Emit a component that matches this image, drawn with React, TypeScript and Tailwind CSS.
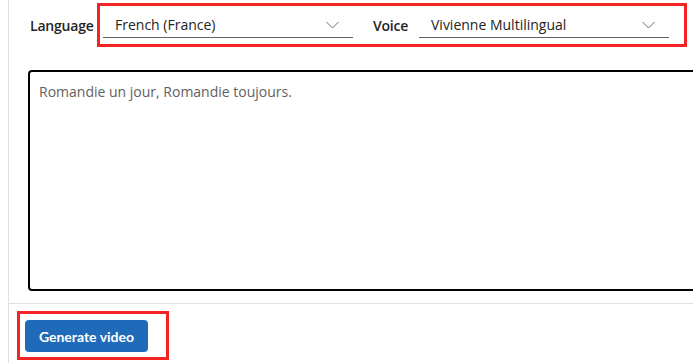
function Chevron() {
  return (
    <svg width="13" height="8" viewBox="0 0 13 8" fill="none" className="mt-[1px]">
      <path d="M0.5 1 L6.5 7 L12.5 1" stroke="#707070" strokeWidth="1" />
    </svg>
  );
}

function Select({ value }: { value: string }) {
  return (
    <div className="flex h-[32px] w-[250px] items-center justify-between border-b border-[#616161] pl-[12px] pr-[14px] pt-[5px]">
      <span className="text-[14px] text-[#242424]">{value}</span>
      <Chevron />
    </div>
  );
}

export default function App() {
  return (
    <div
      className="relative h-[363px] w-[693px] overflow-hidden bg-white"
      style={{ fontFamily: '"Segoe UI", "Open Sans", "Noto Sans", sans-serif' }}
    >
      <div className="ml-[8px] flex h-full w-[760px] flex-col border-l border-[#e0e0e0]">
        <div className="flex h-[70px] flex-col pl-[19px]">
          <div className="flex items-center pt-[6px]">
            <span className="mt-[6px] w-[75px] pl-[2px] text-[14px] font-semibold tracking-[-0.2px] text-[#242424]">Language</span>
            <Select value="French (France)" />
            <span className="ml-[20px] mt-[6px] w-[46px] text-[14px] font-semibold tracking-[-0.2px] text-[#242424]">Voice</span>
            <Select value="Vivienne Multilingual" />
          </div>
        </div>
        <div className="pl-[19px]">
          <div className="h-[221px] w-[700px] rounded-[4px] border-2 border-black px-[9px] pt-[9px] text-[14px] text-[#616161]">
            Romandie un jour, Romandie toujours.
          </div>
        </div>
        <div className="mt-[12px] flex-1 border-t border-[#e0e0e0] pl-[16px] pt-[16px]">
          <button
            className="h-[32px] w-[123px] rounded-[4px] bg-[#1f6bb9] text-[14px] font-bold text-white"
            style={{ fontFamily: "Lato, sans-serif" }}
          >
            Generate video
          </button>
        </div>
      </div>

      <div className="pointer-events-none absolute left-[97px] top-[3px] h-[44px] w-[590px] border-[3px] border-[#f52424]" />
      <div className="pointer-events-none absolute left-[17px] top-[311px] h-[49px] w-[152px] border-[3px] border-[#f52424]" />
    </div>
  );
}
